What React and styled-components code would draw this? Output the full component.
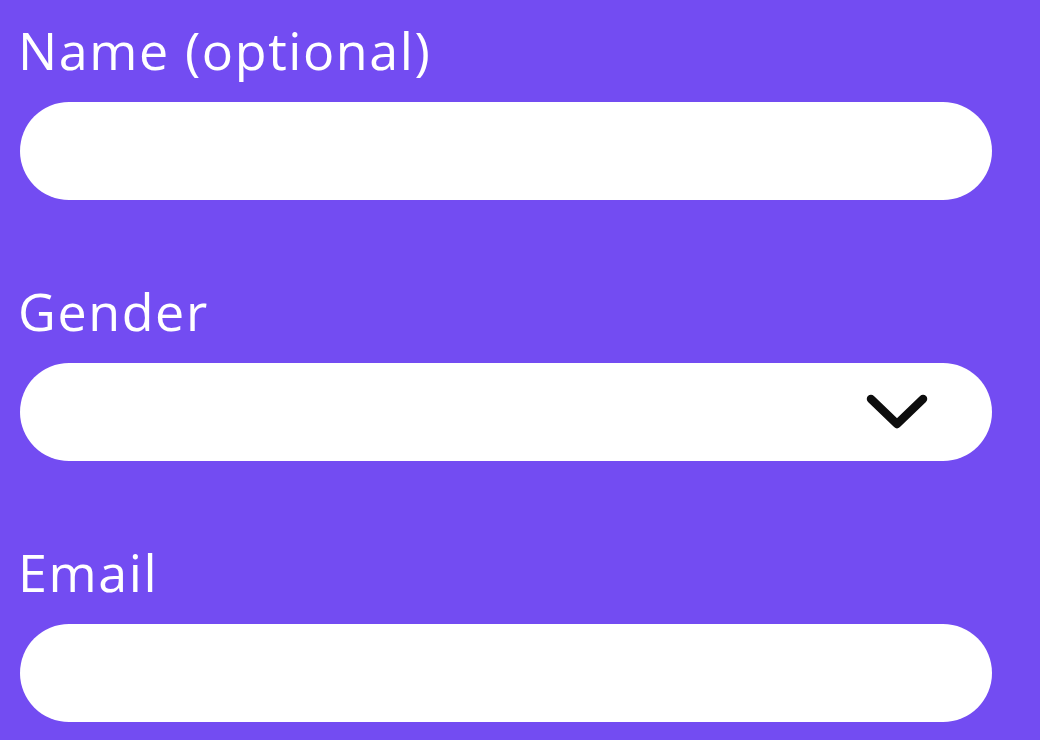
import React from 'react';
import styled, { createGlobalStyle } from 'styled-components';

const GlobalStyle = createGlobalStyle`
  html, body {
    margin: 0;
    padding: 0;
    background: #734cf2;
  }
  * {
    box-sizing: border-box;
  }
`;

const FormStyled = styled.form`
  display: flex;
  flex-direction: column;
  gap: 79px;
  padding: 18px 48px 0 20px;
  font-family: 'Open Sans', 'DejaVu Sans', sans-serif;
`;

const Field = styled.div`
  display: flex;
  flex-direction: column;
  gap: 20px;
`;

const Label = styled.label`
  color: #ffffff;
  font-size: 52px;
  line-height: 64px;
  font-weight: 400;
  letter-spacing: 1.6px;
  margin-left: -2px;
`;

const Pill = styled.div`
  position: relative;
  height: 98px;
  width: 972px;
  background: #ffffff;
  border-radius: 49px;
`;

const InputStyled = styled.input`
  width: 100%;
  height: 100%;
  border: none;
  outline: none;
  background: transparent;
  border-radius: 49px;
  padding: 0 40px;
  font-size: 30px;
  font-family: inherit;
`;

const Chevron = styled.svg`
  position: absolute;
  right: 64px;
  top: 30px;
  pointer-events: none;
`;

function TextField({ label, type = 'text' }) {
  return (
    <Field>
      <Label>{label}</Label>
      <Pill>
        <InputStyled type={type} />
      </Pill>
    </Field>
  );
}

export default function App() {
  return (
    <>
      <GlobalStyle />
      <FormStyled>
        <TextField label="Name (optional)" />
        <Field>
          <Label>Gender</Label>
          <Pill>
            <Chevron width="62" height="38" viewBox="0 0 62 38">
              <polyline
                points="5,6 31,31 57,6"
                fill="none"
                stroke="#0d0d0d"
                strokeWidth="8.5"
                strokeLinecap="round"
                strokeLinejoin="round"
              />
            </Chevron>
          </Pill>
        </Field>
        <TextField label="Email" type="email" />
      </FormStyled>
    </>
  );
}
